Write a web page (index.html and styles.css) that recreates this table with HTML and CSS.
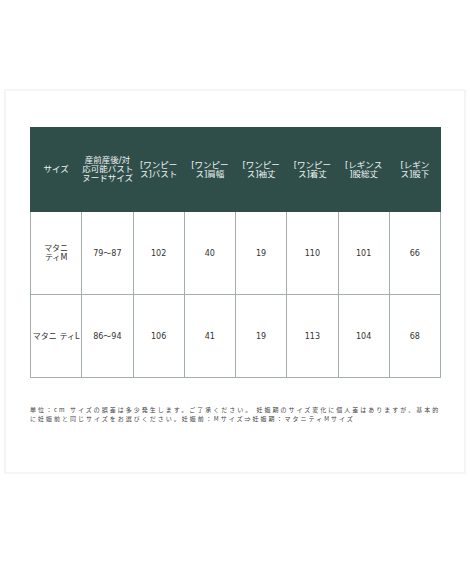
FILE: index.html
```html
<!DOCTYPE html>
<html lang="ja">
<head>
<meta charset="utf-8">
<link rel="stylesheet" href="styles.css">
</head>
<body>
<div class="card">
  <table class="size-table">
    <colgroup>
      <col class="c"><col class="c"><col class="c"><col class="c"><col class="c"><col class="c"><col class="c"><col class="c">
    </colgroup>
    <thead>
      <tr>
        <th>サイズ</th>
        <th>産前産後/対<br>応可能バスト<br>ヌードサイズ</th>
        <th>[ワンピー<br>ス]バスト</th>
        <th>[ワンピー<br>ス]肩幅</th>
        <th>[ワンピー<br>ス]袖丈</th>
        <th>[ワンピー<br>ス]着丈</th>
        <th>[レギンス<br>]股総丈</th>
        <th>[レギン<br>ス]股下</th>
      </tr>
    </thead>
    <tbody>
      <tr>
        <td>マタニ<br>ティM</td>
        <td>79〜87</td>
        <td>102</td>
        <td>40</td>
        <td>19</td>
        <td>110</td>
        <td>101</td>
        <td>66</td>
      </tr>
      <tr>
        <td class="nowrap">マタニ ティL</td>
        <td>86〜94</td>
        <td>106</td>
        <td>41</td>
        <td>19</td>
        <td>113</td>
        <td>104</td>
        <td>68</td>
      </tr>
    </tbody>
  </table>
  <p class="note">単位：cm サイズの誤差は多少発生します。ご了承ください。 妊娠期のサイズ変化に個人差はありますが、基本的<br>に妊娠前と同じサイズをお選びください。妊娠前：Mサイズ⇒妊娠期：マタニティMサイズ</p>
</div>
</body>
</html>
```
FILE: styles.css
```css
html, body {
  margin: 0;
  padding: 0;
  background: #ffffff;
}

body {
  padding: 89px 0 0 4px;
}

.card {
  box-sizing: border-box;
  width: 462px;
  height: 385px;
  border: 2px solid #f5f5f5;
  background: #fff;
  padding: 36px 0 0 24px;
}

.size-table {
  border-collapse: collapse;
  table-layout: fixed;
  width: 411px;
  font-family: "DejaVu Sans", "Noto Sans CJK JP", sans-serif;
  font-size: 8px;
}

.size-table col.c {
  width: 12.5%;
}

.size-table th,
.size-table td {
  padding: 0;
  text-align: center;
  vertical-align: middle;
  line-height: 9px;
}

.size-table thead tr {
  height: 84px;
  background: #2f4e4a;
}

.size-table th {
  color: #eef2f1;
  font-weight: normal;
  font-size: 8.5px;
  white-space: nowrap;
  border: 1px solid #2f4e4a;
}

.size-table tbody tr {
  height: 83px;
}

.size-table td {
  color: #333;
  border: 1px solid #a3adab;
}

.size-table td.nowrap {
  white-space: nowrap;
  overflow: visible;
}

.note {
  margin: 27px 0 0 0;
  font-family: "Noto Sans CJK JP", sans-serif;
  font-size: 6px;
  line-height: 9px;
  letter-spacing: 2px;
  color: #444;
  white-space: nowrap;
}
```
